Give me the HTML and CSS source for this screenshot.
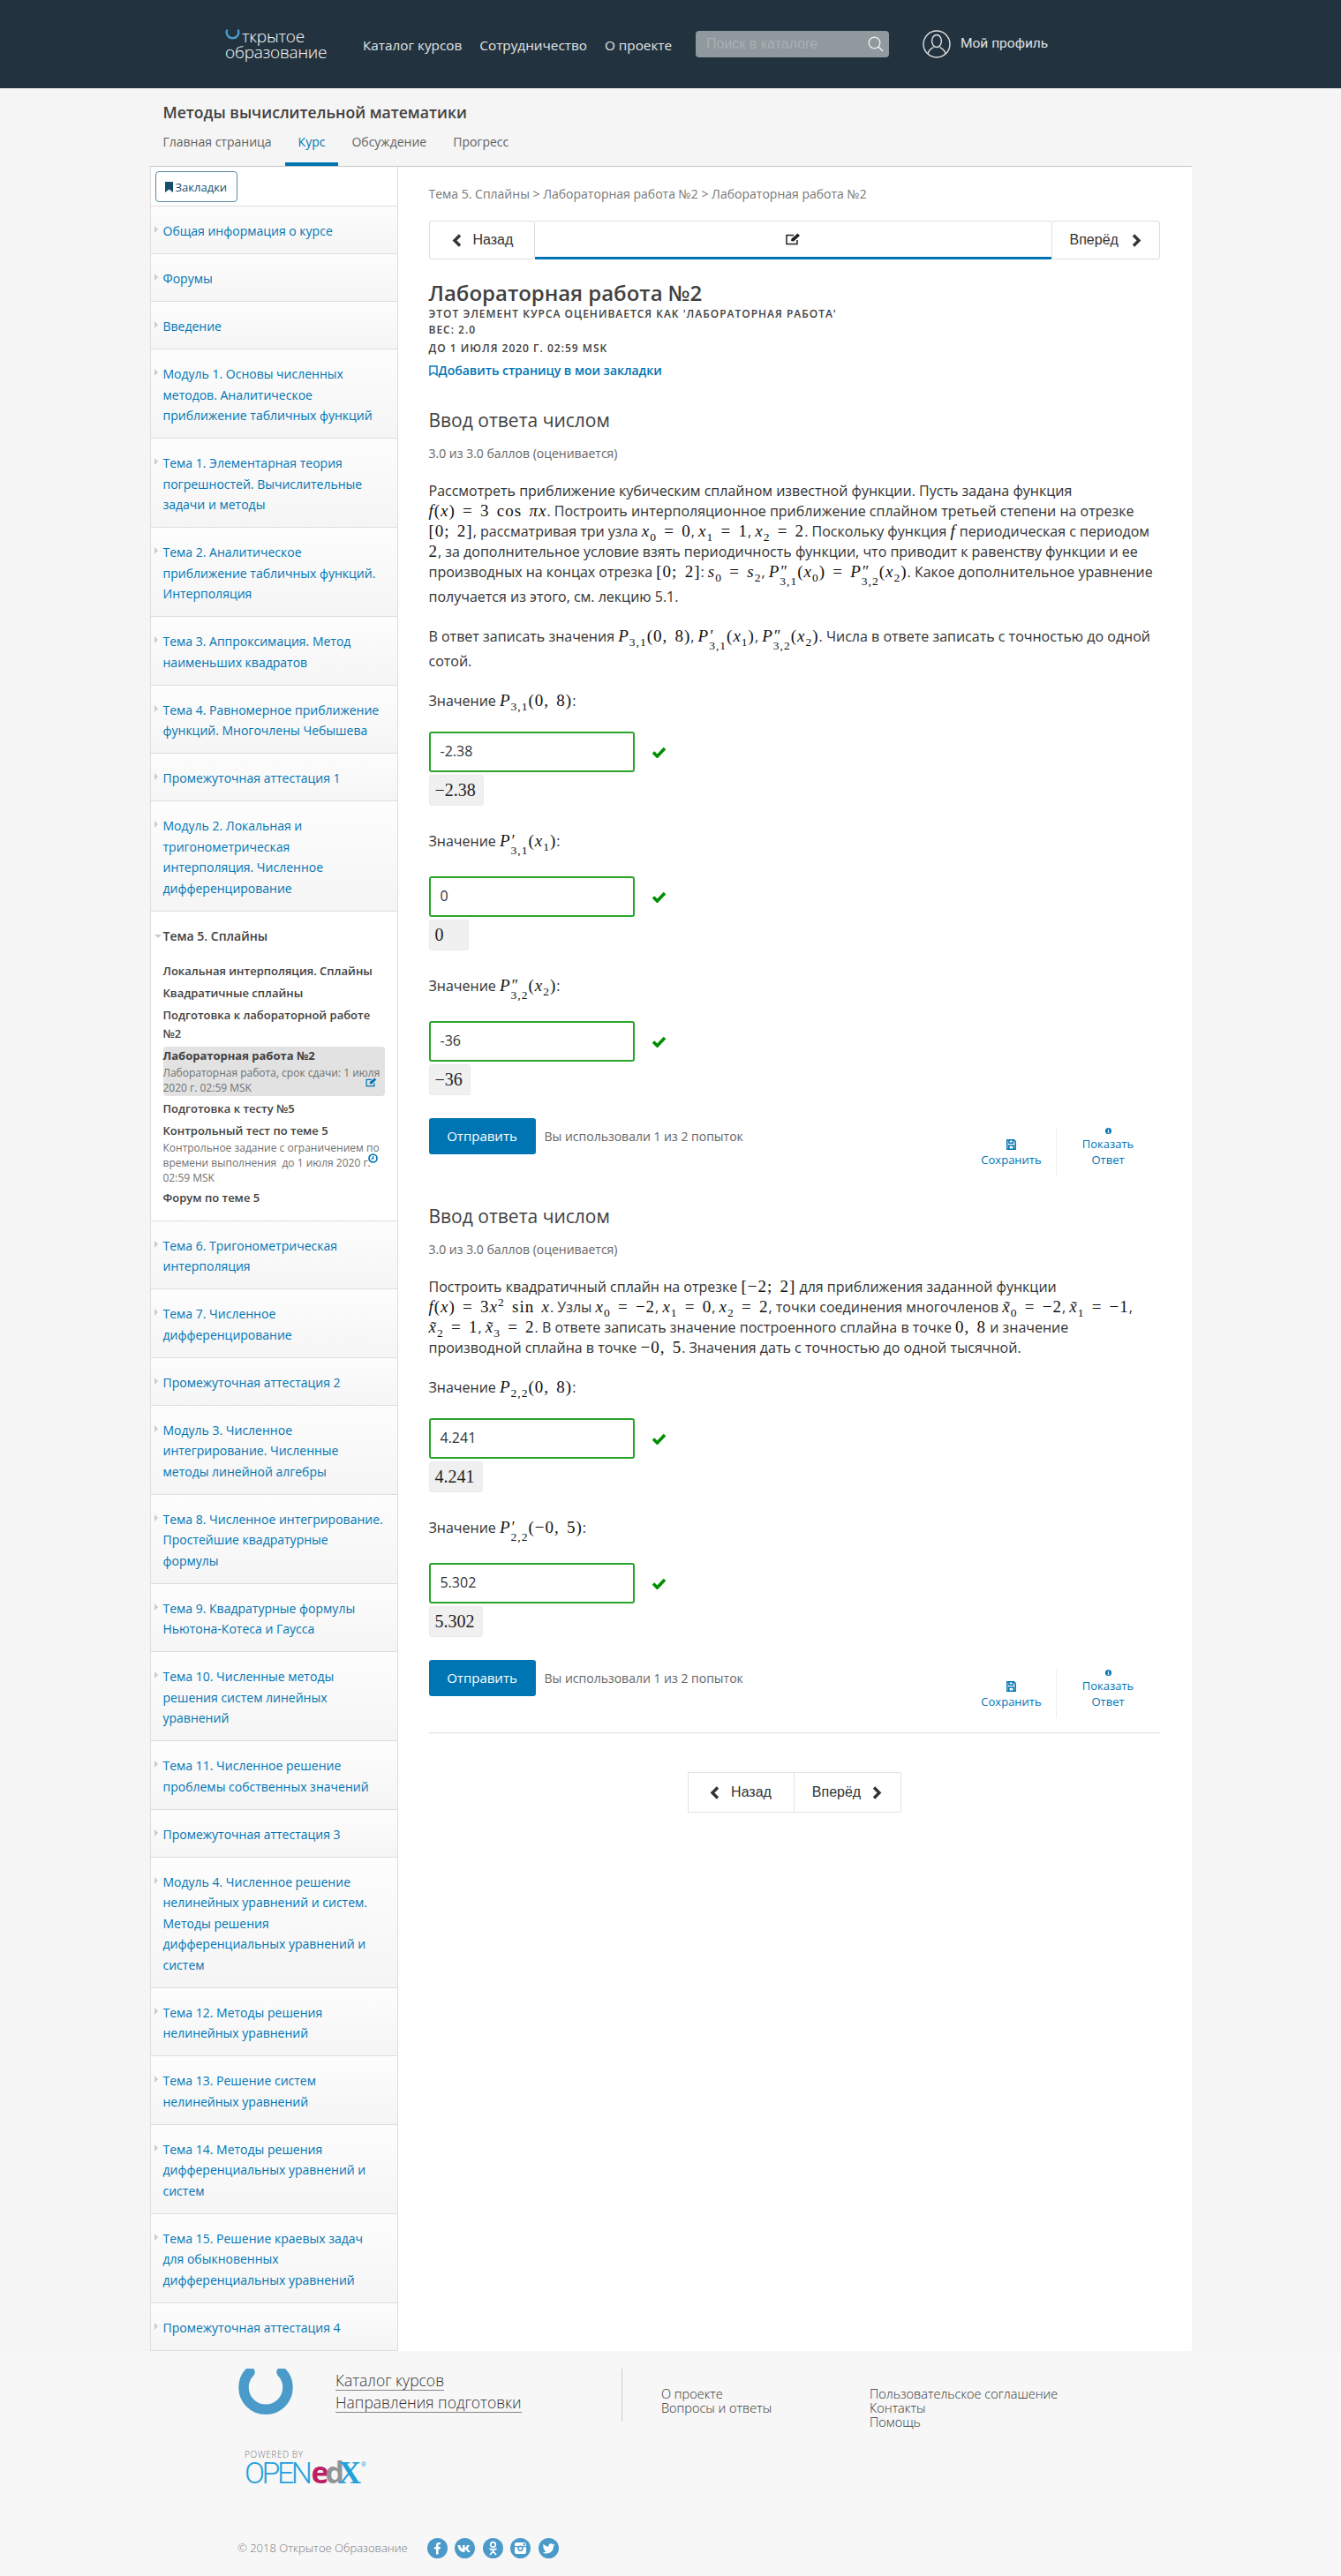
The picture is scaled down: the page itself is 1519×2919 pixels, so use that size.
FILE: index.html
```html
<!DOCTYPE html>
<html>
<head>
  <title>Лабораторная работа №2</title>
  <meta charset="utf-8">
  <link rel="stylesheet" href="styles.css">
</head>
<body>
  <header class="topbar">
    <a class="brand">
      <span class="brand-line"><svg class="brand-arc" width="17" height="15" viewBox="0 0 17 15"><path d="M2 2.5 A6.8 6.8 0 1 0 15 2.5" fill="none" stroke="#4a9aca" stroke-width="2.4" stroke-linecap="round"/></svg>ткрытое</span>
      <span class="brand-line">образование</span>
    </a>
    <nav class="topnav">
      <a>Каталог курсов</a>
      <a>Сотрудничество</a>
      <a>О проекте</a>
    </nav>
    <div class="search">
      <span>Поиск в каталоге</span>
      <svg width="18" height="18" viewBox="0 0 18 18"><circle cx="7.5" cy="7.5" r="6.3" fill="none" stroke="#f0f0f0" stroke-width="1.3"/><path d="M12 12 L17 17" stroke="#f0f0f0" stroke-width="1.5"/></svg>
    </div>
    <a class="profile">
      <svg width="32" height="32" viewBox="0 0 32 32"><circle cx="16" cy="16" r="15" fill="none" stroke="#e0e0e0" stroke-width="1.4"/><ellipse cx="16" cy="12.5" rx="5.4" ry="7" fill="none" stroke="#e0e0e0" stroke-width="1.4"/><path d="M6 27 C7 22 10 21 12.5 19.5 M26 27 C25 22 22 21 19.5 19.5" fill="none" stroke="#e0e0e0" stroke-width="1.4"/></svg>
      <span>Мой профиль</span>
    </a>
  </header>

  <div class="course-head">
    <h1 class="course-title">Методы вычислительной математики</h1>
    <nav class="tabs">
      <a>Главная страница</a>
      <a class="active">Курс</a>
      <a>Обсуждение</a>
      <a>Прогресс</a>
    </nav>
  </div>

  <div class="container">
    <aside class="sidebar">
      <div class="bookmarks-row">
        <a class="bookmarks-btn"><svg width="9" height="12" viewBox="0 0 9 12"><path d="M0 0H9V12L4.5 8.5 0 12Z" fill="#14506e"/></svg>Закладки</a>
      </div>
      <a class="chapter">Общая информация о курсе</a>
      <a class="chapter">Форумы</a>
      <a class="chapter">Введение</a>
      <a class="chapter">Модуль 1. Основы численных<br>методов. Аналитическое<br>приближение табличных функций</a>
      <a class="chapter">Тема 1. Элементарная теория<br>погрешностей. Вычислительные<br>задачи и методы</a>
      <a class="chapter">Тема 2. Аналитическое<br>приближение табличных функций.<br>Интерполяция</a>
      <a class="chapter">Тема 3. Аппроксимация. Метод<br>наименьших квадратов</a>
      <a class="chapter">Тема 4. Равномерное приближение<br>функций. Многочлены Чебышева</a>
      <a class="chapter">Промежуточная аттестация 1</a>
      <a class="chapter">Модуль 2. Локальная и<br>тригонометрическая<br>интерполяция. Численное<br>дифференцирование</a>
      <div class="chapter-open">
        <div class="open-title">Тема 5. Сплайны</div>
        <a class="sub-item">Локальная интерполяция. Сплайны</a>
        <a class="sub-item">Квадратичные сплайны</a>
        <a class="sub-item">Подготовка к лабораторной работе<br>№2</a>
        <a class="sub-item current">
          <b>Лабораторная работа №2</b>
          <small>Лабораторная работа, срок сдачи: 1 июля<br>2020 г. 02:59 MSK</small>
          <svg class="side-icon" width="13" height="11" viewBox="0 0 17 14"><path d="M13 8V12.5H1.5V3H9" fill="none" stroke="#0075b4" stroke-width="1.6"/><path d="M6 9 L6.5 6.5 13.5 0.5 16 3 9 9.5Z" fill="#0075b4"/></svg>
        </a>
        <a class="sub-item">Подготовка к тесту №5</a>
        <a class="sub-item">
          <b>Контрольный тест по теме 5</b>
          <small>Контрольное задание с ограничением по<br>времени выполнения &nbsp;до 1 июля 2020 г.<br>02:59 MSK</small>
          <svg class="side-icon clock" width="11" height="11" viewBox="0 0 11 11"><circle cx="5.5" cy="5.5" r="4.5" fill="none" stroke="#0075b4" stroke-width="1.7"/><path d="M5.8 2.8V5.8H3.4" fill="none" stroke="#0075b4" stroke-width="1.2"/></svg>
        </a>
        <a class="sub-item">Форум по теме 5</a>
      </div>
      <a class="chapter">Тема 6. Тригонометрическая<br>интерполяция</a>
      <a class="chapter">Тема 7. Численное<br>дифференцирование</a>
      <a class="chapter">Промежуточная аттестация 2</a>
      <a class="chapter">Модуль 3. Численное<br>интегрирование. Численные<br>методы линейной алгебры</a>
      <a class="chapter">Тема 8. Численное интегрирование.<br>Простейшие квадратурные<br>формулы</a>
      <a class="chapter">Тема 9. Квадратурные формулы<br>Ньютона-Котеса и Гаусса</a>
      <a class="chapter">Тема 10. Численные методы<br>решения систем линейных<br>уравнений</a>
      <a class="chapter">Тема 11. Численное решение<br>проблемы собственных значений</a>
      <a class="chapter">Промежуточная аттестация 3</a>
      <a class="chapter">Модуль 4. Численное решение<br>нелинейных уравнений и систем.<br>Методы решения<br>дифференциальных уравнений и<br>систем</a>
      <a class="chapter">Тема 12. Методы решения<br>нелинейных уравнений</a>
      <a class="chapter">Тема 13. Решение систем<br>нелинейных уравнений</a>
      <a class="chapter">Тема 14. Методы решения<br>дифференциальных уравнений и<br>систем</a>
      <a class="chapter">Тема 15. Решение краевых задач<br>для обыкновенных<br>дифференциальных уравнений</a>
      <a class="chapter">Промежуточная аттестация 4</a>
    </aside>

    <main class="content">
      <div class="breadcrumb">Тема 5. Сплайны &gt; Лабораторная работа №2 &gt; Лабораторная работа №2</div>

      <div class="seq-nav">
        <a class="seq-btn back"><svg width="11" height="15" viewBox="0 0 11 15"><path d="M9 1.5 L3 7.5 9 13.5" fill="none" stroke="#333" stroke-width="3.4"/></svg><span>Назад</span></a>
        <div class="seq-tab"><svg width="17" height="14" viewBox="0 0 17 14"><path d="M13 8V12.5H1V2.5H9" fill="none" stroke="#222" stroke-width="1.5"/><path d="M6 9 L6.5 6.5 13.5 0.5 16 3 9 9.5Z" fill="#222"/></svg></div>
        <a class="seq-btn next"><span>Вперёд</span><svg width="11" height="15" viewBox="0 0 11 15"><path d="M2 1.5 L8 7.5 2 13.5" fill="none" stroke="#333" stroke-width="3.4"/></svg></a>
      </div>

      <h2 class="unit-title">Лабораторная работа №2</h2>
      <div class="unit-meta">Этот элемент курса оценивается как 'Лабораторная работа'</div>
      <div class="unit-meta">Вес: 2.0</div>
      <div class="unit-meta due">до 1 июля 2020 г. 02:59 MSK</div>
      <a class="add-bookmark"><svg width="10" height="12" viewBox="0 0 10 12"><path d="M1 1H9V11L5 8 1 11Z" fill="none" stroke="#0075b4" stroke-width="1.4"/></svg>Добавить страницу в мои закладки</a>

      <section class="problem first">
        <h3>Ввод ответа числом</h3>
        <div class="score">3.0 из 3.0 баллов (оценивается)</div>
        <p>Рассмотреть приближение кубическим сплайном известной функции. Пусть задана функция<br>
        <span class="m"><i>f</i>(<i>x</i>) = 3 cos <i>πx</i></span>. Построить интерполяционное приближение сплайном третьей степени на отрезке<br>
        <span class="m">[0; 2]</span>, рассматривая три узла <span class="m"><i>x</i><sub>0</sub> = 0</span>, <span class="m"><i>x</i><sub>1</sub> = 1</span>, <span class="m"><i>x</i><sub>2</sub> = 2</span>. Поскольку функция <span class="m"><i>f</i></span> периодическая с периодом<br>
        <span class="m">2</span>, за дополнительное условие взять периодичность функции, что приводит к равенству функции и ее<br>
        производных на концах отрезка <span class="m">[0; 2]</span>: <span class="m"><i>s</i><sub>0</sub> = <i>s</i><sub>2</sub></span>, <span class="m"><i>P</i><span class="ss"><span>″</span><span>3,1</span></span>(<i>x</i><sub>0</sub>) = <i>P</i><span class="ss"><span>″</span><span>3,2</span></span>(<i>x</i><sub>2</sub>)</span>. Какое дополнительное уравнение<br>
        получается из этого, см. лекцию 5.1.</p>
        <p>В ответ записать значения <span class="m"><i>P</i><sub>3,1</sub>(0, 8)</span>, <span class="m"><i>P</i><span class="ss"><span>′</span><span>3,1</span></span>(<i>x</i><sub>1</sub>)</span>, <span class="m"><i>P</i><span class="ss"><span>″</span><span>3,2</span></span>(<i>x</i><sub>2</sub>)</span>. Числа в ответе записать с точностью до одной<br>
        сотой.</p>

        <div class="field">
          <div class="field-label">Значение <span class="m"><i>P</i><sub>3,1</sub>(0, 8)</span>:</div>
          <div class="answer-row">
            <div class="answer-input">-2.38</div>
            <svg class="check" width="17" height="13" viewBox="0 0 17 13"><path d="M2 6.5 L6.5 11 15 2" fill="none" stroke="#008f00" stroke-width="3.6"/></svg>
          </div>
          <div class="answer-preview">−2.38</div>
        </div>
        <div class="field">
          <div class="field-label tall">Значение <span class="m"><i>P</i><span class="ss"><span>′</span><span>3,1</span></span>(<i>x</i><sub>1</sub>)</span>:</div>
          <div class="answer-row">
            <div class="answer-input">0</div>
            <svg class="check" width="17" height="13" viewBox="0 0 17 13"><path d="M2 6.5 L6.5 11 15 2" fill="none" stroke="#008f00" stroke-width="3.6"/></svg>
          </div>
          <div class="answer-preview">0</div>
        </div>
        <div class="field">
          <div class="field-label tall">Значение <span class="m"><i>P</i><span class="ss"><span>″</span><span>3,2</span></span>(<i>x</i><sub>2</sub>)</span>:</div>
          <div class="answer-row">
            <div class="answer-input">-36</div>
            <svg class="check" width="17" height="13" viewBox="0 0 17 13"><path d="M2 6.5 L6.5 11 15 2" fill="none" stroke="#008f00" stroke-width="3.6"/></svg>
          </div>
          <div class="answer-preview">−36</div>
        </div>

        <div class="actions">
          <a class="submit">Отправить</a>
          <span class="attempts">Вы использовали 1 из 2 попыток</span>
          <div class="action-links">
            <a class="action save"><svg width="11" height="12" viewBox="0 0 11 12"><path d="M0.8 0.8H8.5L10.2 2.5V11.2H0.8Z M3 0.8V4.2H7.5V0.8 M2.8 11.2V7H8.2V11.2" fill="none" stroke="#0075b4" stroke-width="1.5"/></svg>Сохранить</a>
            <a class="action show"><svg width="13" height="13" viewBox="0 0 13 13"><circle cx="6.5" cy="6.5" r="6.5" fill="#0075b4"/><path d="M5.3 2.2H7.7V4H5.3Z M4.8 5.2H7.7V9.3H8.6V10.8H4.6V9.3H5.4V6.7H4.8Z" fill="#fff"/></svg>Показать<br>Ответ</a>
          </div>
        </div>
      </section>

      <section class="problem">
        <h3>Ввод ответа числом</h3>
        <div class="score">3.0 из 3.0 баллов (оценивается)</div>
        <p>Построить квадратичный сплайн на отрезке <span class="m">[−2; 2]</span> для приближения заданной функции<br>
        <span class="m"><i>f</i>(<i>x</i>) = 3<i>x</i><sup>2</sup> sin <i>x</i></span>. Узлы <span class="m"><i>x</i><sub>0</sub> = −2</span>, <span class="m"><i>x</i><sub>1</sub> = 0</span>, <span class="m"><i>x</i><sub>2</sub> = 2</span>, точки соединения многочленов <span class="m"><i>x̃</i><sub>0</sub> = −2</span>, <span class="m"><i>x̃</i><sub>1</sub> = −1</span>,<br>
        <span class="m"><i>x̃</i><sub>2</sub> = 1</span>, <span class="m"><i>x̃</i><sub>3</sub> = 2</span>. В ответе записать значение построенного сплайна в точке <span class="m">0, 8</span> и значение<br>
        производной сплайна в точке <span class="m">−0, 5</span>. Значения дать с точностью до одной тысячной.</p>

        <div class="field">
          <div class="field-label">Значение <span class="m"><i>P</i><sub>2,2</sub>(0, 8)</span>:</div>
          <div class="answer-row">
            <div class="answer-input">4.241</div>
            <svg class="check" width="17" height="13" viewBox="0 0 17 13"><path d="M2 6.5 L6.5 11 15 2" fill="none" stroke="#008f00" stroke-width="3.6"/></svg>
          </div>
          <div class="answer-preview">4.241</div>
        </div>
        <div class="field">
          <div class="field-label tall">Значение <span class="m"><i>P</i><span class="ss"><span>′</span><span>2,2</span></span>(−0, 5)</span>:</div>
          <div class="answer-row">
            <div class="answer-input">5.302</div>
            <svg class="check" width="17" height="13" viewBox="0 0 17 13"><path d="M2 6.5 L6.5 11 15 2" fill="none" stroke="#008f00" stroke-width="3.6"/></svg>
          </div>
          <div class="answer-preview">5.302</div>
        </div>

        <div class="actions">
          <a class="submit">Отправить</a>
          <span class="attempts">Вы использовали 1 из 2 попыток</span>
          <div class="action-links">
            <a class="action save"><svg width="11" height="12" viewBox="0 0 11 12"><path d="M0.8 0.8H8.5L10.2 2.5V11.2H0.8Z M3 0.8V4.2H7.5V0.8 M2.8 11.2V7H8.2V11.2" fill="none" stroke="#0075b4" stroke-width="1.5"/></svg>Сохранить</a>
            <a class="action show"><svg width="13" height="13" viewBox="0 0 13 13"><circle cx="6.5" cy="6.5" r="6.5" fill="#0075b4"/><path d="M5.3 2.2H7.7V4H5.3Z M4.8 5.2H7.7V9.3H8.6V10.8H4.6V9.3H5.4V6.7H4.8Z" fill="#fff"/></svg>Показать<br>Ответ</a>
          </div>
        </div>
      </section>

      <hr class="end-rule">

      <div class="bottom-nav">
        <a class="bottom-btn"><svg width="11" height="15" viewBox="0 0 11 15"><path d="M9 1.5 L3 7.5 9 13.5" fill="none" stroke="#333" stroke-width="3.4"/></svg><span>Назад</span></a>
        <a class="bottom-btn"><span>Вперёд</span><svg width="11" height="15" viewBox="0 0 11 15"><path d="M2 1.5 L8 7.5 2 13.5" fill="none" stroke="#333" stroke-width="3.4"/></svg></a>
      </div>
    </main>
  </div>

  <footer class="footer">
    <div class="footer-top">
      <svg class="footer-logo" width="64" height="53" viewBox="0 0 64 53"><path d="M14 4 A25 25 0 1 0 50 4" fill="none" stroke="#4a9aca" stroke-width="11.5" stroke-linecap="round"/></svg>
      <div class="footer-main">
        <a>Каталог курсов</a>
        <a>Направления подготовки</a>
      </div>
      <div class="footer-col first">
        <a>О проекте</a>
        <a>Вопросы и ответы</a>
      </div>
      <div class="footer-col">
        <a>Пользовательское соглашение</a>
        <a>Контакты</a>
        <a>Помощь</a>
      </div>
    </div>
    <div class="edx">
      <div class="edx-powered">POWERED BY</div>
      <div class="edx-mark"><span class="edx-open">OPEN</span><span class="edx-e">e</span><span class="edx-d">d</span><span class="edx-x">X</span><span class="edx-r">®</span></div>
    </div>
    <div class="footer-bottom">
      <span class="copyright">© 2018 Открытое Образование</span>
      <div class="socials">
        <svg width="23" height="23" viewBox="0 0 23 23"><circle cx="11.5" cy="11.5" r="11.5" fill="#4a9aca"/><path d="M12.6 18.5V12.4H14.7L15 10H12.6V8.5C12.6 7.8 12.8 7.3 13.8 7.3H15.1V5.2C14.9 5.2 14.1 5.1 13.2 5.1 11.3 5.1 10 6.3 10 8.3V10H7.9V12.4H10V18.5Z" fill="#fff"/></svg>
        <svg width="23" height="23" viewBox="0 0 23 23"><circle cx="11.5" cy="11.5" r="11.5" fill="#4a9aca"/><path d="M3.5 8H6.2C6.8 10.5 8 12.3 9 12.5V8H11.5V11C12.5 10.8 13.6 9.6 14.2 8H16.8C16.4 9.8 15.2 11.2 14.3 11.9 15.2 12.4 16.8 13.8 17.6 16H14.8C14.2 14.6 13 13.3 11.5 13.1V16H10.8C6.6 16 4 12.8 3.5 8Z" fill="#fff"/></svg>
        <svg width="23" height="23" viewBox="0 0 23 23"><circle cx="11.5" cy="11.5" r="11.5" fill="#4a9aca"/><circle cx="11.5" cy="7.5" r="2.8" fill="none" stroke="#fff" stroke-width="1.7"/><path d="M7.5 12C10 13.6 13 13.6 15.5 12 M11.5 13.2V15 M8 19 L11.5 15 15 19" fill="none" stroke="#fff" stroke-width="1.8"/></svg>
        <svg width="23" height="23" viewBox="0 0 23 23"><circle cx="11.5" cy="11.5" r="11.5" fill="#4a9aca"/><rect x="5" y="5" width="13" height="13" rx="2" fill="#fff"/><rect x="5" y="9" width="13" height="1.2" fill="#4a9aca"/><circle cx="11.5" cy="11.8" r="3.2" fill="#4a9aca"/><circle cx="11.5" cy="11.8" r="1.7" fill="#fff"/><rect x="14.5" y="6" width="2.4" height="2.2" fill="#4a9aca"/></svg>
        <svg width="23" height="23" viewBox="0 0 23 23"><circle cx="11.5" cy="11.5" r="11.5" fill="#4a9aca"/><g transform="translate(3.6 3.6) scale(.66)"><path d="M22.46 6c-.77.35-1.6.58-2.46.69.88-.53 1.56-1.37 1.88-2.38-.83.5-1.75.85-2.72 1.05C18.37 4.5 17.26 4 16 4c-2.35 0-4.27 1.92-4.27 4.29 0 .34.04.67.11.98C8.28 9.09 5.11 7.38 3 4.79c-.37.63-.58 1.37-.58 2.15 0 1.49.75 2.81 1.91 3.56-.71 0-1.37-.2-1.95-.5v.03c0 2.08 1.48 3.82 3.44 4.21a4.22 4.22 0 0 1-1.93.07 4.28 4.28 0 0 0 4 2.98 8.521 8.521 0 0 1-5.33 1.84c-.34 0-.68-.02-1.02-.06C3.44 20.29 5.7 21 8.12 21 16 21 20.33 14.46 20.33 8.79c0-.19 0-.37-.01-.56.84-.6 1.56-1.36 2.14-2.23z" fill="#fff"/></g></svg>
      </div>
    </div>
  </footer>
</body>
</html>
```

FILE: styles.css
```css
* {
  box-sizing: border-box;
}
body {
  margin: 0;
  background-color: #f5f5f5;
  font-family: "Open Sans", sans-serif;
  font-size: 14px;
  color: #333;
}
a {
  text-decoration: none;
}

/* top bar */
.topbar {
  height: 100px;
  background-color: #22333f;
  display: flex;
  align-items: center;
  padding-left: 255px;
  color: #e8e8e8;
}
.brand {
  width: 156px;
  display: flex;
  flex-direction: column;
  font-size: 19px;
  line-height: 18px;
  color: #fff;
  font-weight: 300;
}
.brand-line {
  display: flex;
  align-items: center;
  letter-spacing: -0.2px;
}
.brand-arc {
  margin-right: 2px;
  margin-top: -3px;
}
.topnav {
  display: flex;
  gap: 20px;
  font-size: 15.3px;
  width: 377px;
  padding-top: 2px;
}
.topnav a {
  color: #e4e4e4;
}
.search {
  width: 219px;
  height: 30px;
  background-color: #90999e;
  border-radius: 4px;
  display: flex;
  justify-content: space-between;
  align-items: center;
  padding: 0 6px 0 12px;
  font-family: "Liberation Sans", sans-serif;
  font-size: 16px;
  color: #a9b1b5;
}
.profile {
  display: flex;
  align-items: center;
  gap: 11px;
  margin-left: 38px;
  font-family: Roboto, sans-serif;
  font-size: 15.5px;
  color: #e0e0e0;
}
.profile span {
  margin-top: -3px;
}

/* course title + tabs */
.course-head {
  width: 1180px;
  margin: 0 auto;
  height: 88px;
  padding-left: 15px;
}
.course-title {
  margin: 0;
  padding-top: 14px;
  font-size: 17.6px;
  line-height: 26px;
  font-weight: 600;
  color: #414141;
}
.tabs {
  display: flex;
  margin: 9px 0 0 -15px;
}
.tabs a {
  height: 39px;
  padding: 0 15px;
  line-height: 24px;
  color: #616161;
}
.tabs a.active {
  color: #0075b4;
  border-bottom: 4px solid #0075b4;
}

/* main box */
.container {
  width: 1180px;
  margin: 0 auto;
  display: flex;
  background-color: #fff;
  border-top: 1px solid #c8c8c8;
}
.sidebar {
  width: 281px;
  flex-shrink: 0;
  border-left: 1px solid #ddd;
  border-right: 1px solid #ddd;
}
.bookmarks-row {
  height: 45px;
  padding: 5px 0 0 5px;
  border-bottom: 1px solid #ddd;
}
.bookmarks-btn {
  display: inline-flex;
  align-items: center;
  gap: 3px;
  width: 93px;
  height: 35px;
  padding-left: 10px;
  border: 1px solid #5d8aa3;
  border-radius: 4px;
  font-size: 13px;
  color: #14506e;
}
.chapter {
  display: block;
  position: relative;
  padding: 16px 0 13.5px 14px;
  line-height: 23.5px;
  font-size: 14px;
  color: #0075b4;
  white-space: nowrap;
  border-bottom: 1px solid #ddd;
  background: linear-gradient(#fdfdfd, #f5f5f5);
}
.chapter::before {
  content: "";
  position: absolute;
  left: 4px;
  top: 22px;
  border-left: 4px solid #ccc;
  border-top: 4px solid transparent;
  border-bottom: 4px solid transparent;
}
.chapter-open {
  height: 351px;
  padding: 0 0 0 14px;
  border-bottom: 1px solid #ddd;
  position: relative;
}
.open-title {
  padding-top: 16px;
  line-height: 23px;
  font-size: 14px;
  font-weight: 600;
  color: #414141;
  margin-bottom: 18px;
}
.open-title::before {
  content: "";
  position: absolute;
  left: 4px;
  top: 26px;
  border-top: 4px solid #ccc;
  border-left: 4px solid transparent;
  border-right: 4px solid transparent;
}
.sub-item {
  display: block;
  position: relative;
  width: 251px;
  margin-bottom: 4px;
  font-size: 13px;
  line-height: 21px;
  font-weight: 600;
  color: #414141;
  white-space: nowrap;
}
.sub-item b {
  display: block;
  font-weight: 600;
}
.sub-item small {
  display: block;
  font-size: 12px;
  line-height: 17px;
  font-weight: 400;
  color: #707070;
}
.sub-item.current {
  height: 56px;
  margin-top: 4px;
  background-color: #e2e2e2;
  border-radius: 4px;
}
.sub-item.current b {
  font-weight: 700;
}
.side-icon {
  position: absolute;
  right: 9px;
  top: 35px;
}
.side-icon.clock {
  right: 8px;
  top: 36px;
}

/* content */
.content {
  flex: 1;
  padding: 21px 36px 0 35px;
}
.breadcrumb {
  font-size: 14px;
  line-height: 20px;
  color: #777;
}
.seq-nav {
  display: flex;
  height: 44px;
  margin-top: 20px;
}
.seq-btn {
  display: flex;
  align-items: center;
  border: 1px solid #ddd;
  border-radius: 3px;
  font-family: "Liberation Sans", sans-serif;
  font-size: 16px;
  color: #333;
}
.seq-btn.back {
  width: 120px;
  padding-left: 25px;
  gap: 13px;
}
.seq-btn.next {
  width: 123px;
  padding-left: 20px;
  gap: 15px;
}
.seq-tab {
  flex: 1;
  display: flex;
  align-items: center;
  justify-content: center;
  border-top: 1px solid #ddd;
  border-bottom: 3px solid #0075b4;
}
.unit-title {
  margin: 23px 0 0;
  font-size: 24px;
  line-height: 30px;
  font-weight: 600;
  color: #414141;
}
.unit-meta {
  font-size: 12px;
  line-height: 18px;
  font-weight: 600;
  letter-spacing: 1px;
  text-transform: uppercase;
  color: #414141;
}
.unit-meta.due {
  margin-top: 3px;
}
.add-bookmark {
  display: flex;
  align-items: center;
  gap: 1px;
  margin-top: 6px;
  font-size: 14px;
  line-height: 20px;
  font-weight: 600;
  color: #0075b4;
}

/* problems */
.problem {
  padding-top: 31px;
}
.problem.first {
  padding-top: 32px;
}
.problem h3 {
  margin: 0;
  font-size: 21px;
  line-height: 28px;
  font-weight: 400;
  color: #414141;
}
.score {
  margin-top: 15px;
  font-size: 14px;
  line-height: 18px;
  color: #666;
}
.problem p {
  margin: 22px 0 0;
  font-size: 16px;
  line-height: 23px;
  color: #333;
  white-space: nowrap;
}
.m {
  font-family: "Liberation Serif", serif;
  font-size: 19px;
  line-height: 1;
  letter-spacing: 1px;
  word-spacing: 2.5px;
  color: #111;
}
.m sub, .m sup {
  font-size: 13.5px;
  line-height: 0;
}
.ss {
  display: inline-block;
  vertical-align: -9px;
  font-size: 13.5px;
  line-height: 12px;
}
.ss span {
  display: block;
}
.ss span:first-child {
  font-size: 18px;
  font-style: italic;
  line-height: 9px;
}
.field-label {
  height: 23px;
  margin-top: 22px;
  margin-bottom: 23px;
  font-size: 16px;
  line-height: 23px;
  color: #333;
}
.field-label.tall {
  margin-top: 29px;
  margin-bottom: 28px;
}
.answer-row {
  display: flex;
  align-items: center;
}
.answer-input {
  width: 233px;
  height: 46px;
  border: 2px solid #2aa52a;
  border-radius: 3px;
  padding: 0 11px;
  font-size: 16px;
  line-height: 40px;
  color: #333;
}
.check {
  margin-left: 19px;
}
.answer-preview {
  display: table;
  min-width: 45px;
  height: 35px;
  margin-top: 3px;
  padding: 0 8px 0 6px;
  background-color: #f0f0f0;
  border: 1px solid #ebebeb;
  border-radius: 3px;
  font-family: "Liberation Serif", serif;
  font-size: 20px;
  line-height: 33px;
  color: #222;
}
.actions {
  display: flex;
  margin-top: 26px;
}
.submit {
  width: 121px;
  height: 41px;
  background-color: #0075b4;
  border-radius: 3px;
  color: #fff;
  text-align: center;
  line-height: 40px;
  font-size: 15px;
}
.attempts {
  margin-left: 10px;
  font-size: 14px;
  line-height: 41px;
  color: #666;
}
.action-links {
  margin-left: auto;
  margin-top: 11px;
  display: flex;
  height: 55px;
}
.action {
  display: flex;
  flex-direction: column;
  align-items: center;
  justify-content: flex-end;
  padding-bottom: 10px;
  font-size: 13px;
  line-height: 18px;
  color: #0075b4;
  text-align: center;
}
.action svg {
  margin-bottom: 2px;
}
.action.save {
  width: 100px;
}
.action.show {
  width: 118px;
  border-left: 1px solid #eee;
}
.end-rule {
  margin: 16px 0 0;
  border: none;
  border-top: 1px solid #ddd;
}
.bottom-nav {
  display: flex;
  justify-content: center;
  margin-top: 44px;
  margin-bottom: 40px;
}
.bottom-btn {
  display: flex;
  align-items: center;
  justify-content: center;
  gap: 13px;
  width: 121px;
  height: 46px;
  border: 1px solid #e2e2e2;
  font-family: "Liberation Sans", sans-serif;
  font-size: 16px;
  color: #333;
}
.bottom-btn + .bottom-btn {
  border-left: none;
}

/* footer */
.footer {
  height: 256px;
  background-color: #f7f7f7;
  padding: 20px 0 0 269px;
  color: #333;
}
.footer-top {
  display: flex;
  height: 92px;
}
.footer-logo {
  flex-shrink: 0;
}
.footer-main {
  width: 325px;
  margin-left: 47px;
  display: flex;
  flex-direction: column;
  padding-top: 2px;
  height: 60px;
  border-right: 1px solid #ccc;
}
.footer-main a {
  font-size: 17.5px;
  font-weight: 300;
  color: #333;
  align-self: flex-start;
  border-bottom: 1px solid #888;
  line-height: 22px;
  margin-bottom: 2px;
}
.footer-col {
  display: flex;
  flex-direction: column;
  padding-top: 21px;
  font-size: 14.5px;
  line-height: 16px;
  font-weight: 300;
}
.footer-col a {
  color: #333;
}
.footer-col.first {
  width: 236px;
  margin-left: 44px;
}
.edx {
  margin-left: 8px;
  height: 98px;
}
.edx-powered {
  font-size: 10px;
  line-height: 10px;
  font-weight: 300;
  letter-spacing: 0.6px;
  color: #777;
}
.edx-mark {
  display: flex;
  align-items: baseline;
  height: 32px;
  line-height: 30px;
}
.edx-open {
  font-family: Roboto, sans-serif;
  font-size: 34px;
  font-weight: 300;
  letter-spacing: -3.5px;
  color: #23a1dc;
}
.edx-e {
  font-size: 34px;
  font-weight: 700;
  color: #bb2266;
  margin-left: 2px;
}
.edx-d {
  font-size: 34px;
  font-weight: 700;
  color: #929497;
  margin-left: -4px;
}
.edx-x {
  font-family: "Liberation Serif", serif;
  font-size: 36px;
  font-weight: 700;
  color: #23a1dc;
  margin-left: -7px;
}
.edx-r {
  font-size: 7px;
  align-self: flex-start;
  line-height: 14px;
  color: #23a1dc;
}
.footer-bottom {
  display: flex;
  align-items: center;
  gap: 22px;
  margin-top: 2px;
}
.copyright {
  font-size: 13px;
  font-weight: 300;
  color: #777;
}
.socials {
  display: flex;
  gap: 8.5px;
}
```
